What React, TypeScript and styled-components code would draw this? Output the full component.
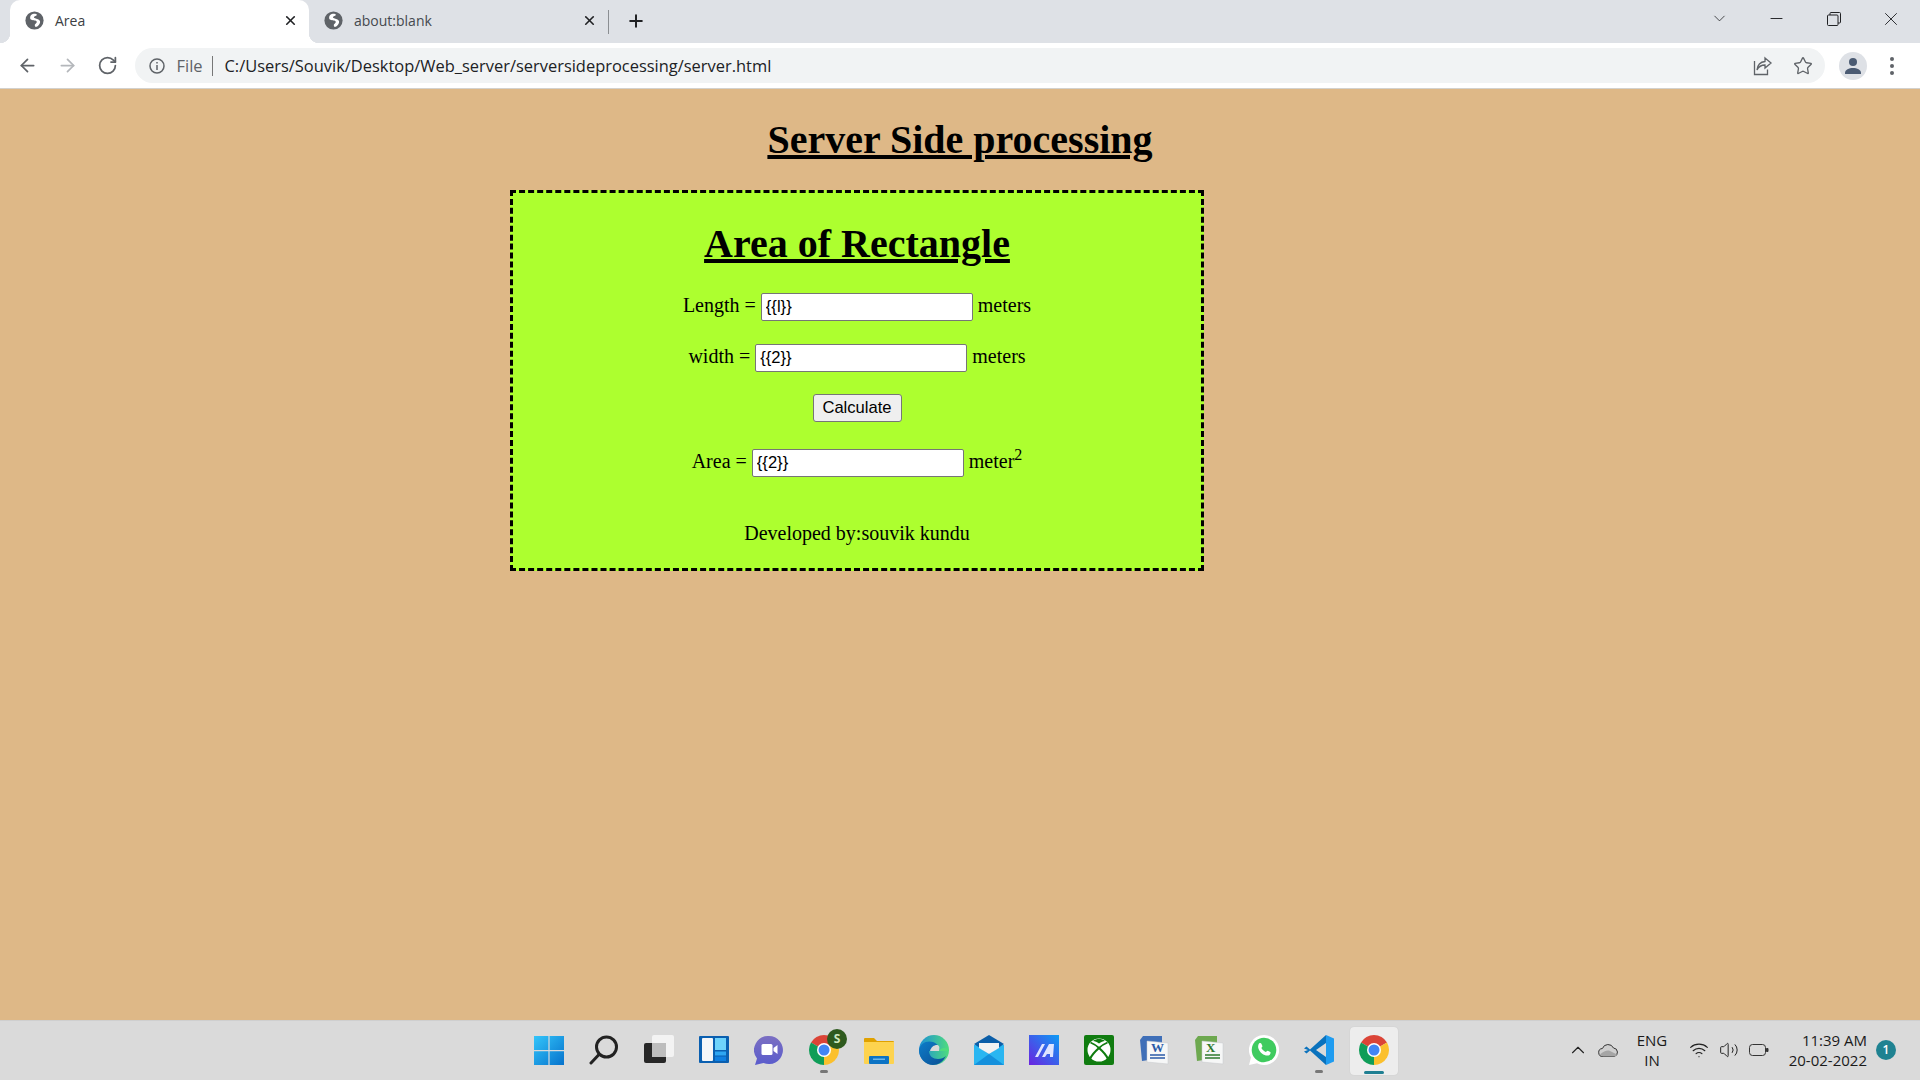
import React from "react";
import styled, { createGlobalStyle } from "styled-components";
import {
  ArrowLeft, ArrowRight, RotateCw, Star, X, Plus, ChevronDown, Minus, ChevronUp, Wifi, Volume2,
} from "lucide-react";

const Global = createGlobalStyle`
  html, body { margin: 0; padding: 0; height: 100%; overflow: hidden; }
  #root { height: 100%; }
`;

const Screen = styled.div`
  width: 1920px; height: 1080px; display: flex; flex-direction: column;
  background: #deb887; overflow: hidden;
`;
const TabStrip = styled.div`
  height: 43px; flex: none; background: #dee1e6; display: flex; align-items: flex-end;
  padding-left: 10px; font-family: "Open Sans", sans-serif; color: #3c4043;
`;
const Tab = styled.div<{ $active?: boolean }>`
  position: relative; width: 299px; height: 43px; display: flex; align-items: center;
  padding: 0 11px 2px 15px; box-sizing: border-box; gap: 11px; font-size: 14px;
  border-radius: 10px 10px 0 0;
  background: ${(p) => (p.$active ? "#fff" : "transparent")};
  color: ${(p) => (p.$active ? "#3c4043" : "#45494e")};
  ${(p) => p.$active && `
    &::before, &::after {
      content: ""; position: absolute; bottom: 0; width: 10px; height: 10px;
    }
    &::before { left: -10px; background: radial-gradient(circle at 0 0, transparent 10px, #fff 10.5px); }
    &::after { right: -10px; background: radial-gradient(circle at 100% 0, transparent 10px, #fff 10.5px); }
  `}
`;
const TabTitle = styled.span`flex: 1; white-space: nowrap;`;
const TabClose = styled(X)`width: 15px; height: 15px; color: #202124; stroke-width: 2.6;`;
const TabDivider = styled.div`width: 1px; height: 24px; background: #8b8e92; margin: 0 0 9px 0;`;
const NewTab = styled(Plus)`width: 20px; height: 20px; margin: 0 0 12px 17px; color: #202124; stroke-width: 2.4;`;
const WindowControls = styled.div`
  margin-left: auto; align-self: stretch; display: flex; align-items: center; padding: 0 18px 6px 0;
  gap: 38px; color: #202124;
`;
const ThinChevron = styled(ChevronDown)`width: 19px; height: 19px; stroke-width: 1;`;
const ThinMinus = styled(Minus)`width: 19px; height: 19px; stroke-width: 1.2;`;
const ThinClose = styled(X)`width: 22px; height: 22px; stroke-width: 1;`;
const RestoreSvg = styled.svg`margin: 0 1.5px 0 2.5px;`;

const Toolbar = styled.div`
  height: 46px; flex: none; background: #fff; display: flex; align-items: center;
  padding: 0 0 0 17px; color: #5f6368; box-sizing: border-box; border-bottom: 1px solid #d3d1cd;
  font-family: "Open Sans", sans-serif;
`;
const NavIcon = styled.span<{ $dim?: boolean }>`
  width: 21px; height: 21px; margin-right: 19px; display: flex; color: ${(p) => (p.$dim ? "#b4b7bb" : "#5f6368")};
  svg { width: 100%; height: 100%; }
`;
const Omnibox = styled.div`
  width: 1690px; height: 35px; margin-left: -2.5px; background: #f1f3f4; border-radius: 18px;
  display: flex; align-items: center; padding: 0 0 0 14px; box-sizing: border-box; font-size: 16.45px; color: #202124;
`;
const FileLabel = styled.span`color: #5f6368; margin-left: 12px; padding-right: 9px; border-right: 1px solid #777; line-height: 20px;`;
const Url = styled.span`margin-left: 12px; flex: 1; white-space: nowrap;`;
const OmniActions = styled.div`display: flex; align-items: center; gap: 20px; padding-right: 12px; color: #5f6368;`;
const Avatar = styled.div`
  width: 28px; height: 28px; border-radius: 50%; background: #dee1e6; margin-left: 14px;
  display: flex; align-items: center; justify-content: center;
`;
const Dots = styled.div`
  display: flex; flex-direction: column; gap: 3px; margin-left: 23px;
  i { width: 4px; height: 4px; border-radius: 50%; background: #5f6368; }
`;

const Page = styled.main`
  flex: 1; min-height: 0; font-family: "Liberation Serif", "Times New Roman", serif; color: #000; font-size: 20px;
`;
const PageTitle = styled.h1`
  margin: 0; height: 101px; padding-top: 28px; box-sizing: border-box; text-align: center;
  font-size: 40px; font-weight: 700; line-height: 46px; text-decoration: underline;
`;
const Card = styled.section`
  width: 694px; height: 381px; margin-left: 510px; box-sizing: border-box; border: 3px dashed #000;
  background: #adff2f; text-align: center; padding-top: 28px;
`;
const CardTitle = styled.h2`
  margin: 0 0 25px; font-size: 40px; line-height: 46px; font-weight: 700; text-decoration: underline;
`;
const Row = styled.p<{ $mt?: number }>`
  margin: ${(p) => p.$mt ?? 0}px 0 0; height: 28px; line-height: 26px;
`;
const Field = styled.input`
  width: 212px; height: 28px; box-sizing: border-box; border: 1px solid #767676; border-radius: 2px;
  background: #fff; padding: 0 4px; font: 16.6px "Liberation Sans", Arial, sans-serif; color: #000; vertical-align: middle;
`;
const CalcButton = styled.button`
  width: 89px; height: 28px; box-sizing: border-box; border: 1px solid #767676; border-radius: 3px;
  background: #efefef; padding: 0; font: 16.6px "Liberation Sans", Arial, sans-serif; color: #000; vertical-align: top;
`;
const Sup = styled.sup`font-size: 16px; line-height: 0;`;
const Credit = styled.p`margin: 46px 0 0; line-height: 23px;`;

const Taskbar = styled.footer`
  height: 60px; flex: none; background: #dadada; border-top: 1px solid #cfcfcf; box-sizing: border-box;
  display: grid; grid-template-columns: 1fr auto 1fr; align-items: center;
`;
const Dock = styled.div`grid-column: 2; display: flex; margin-left: 2px;`;
const DockItem = styled.div<{ $active?: boolean }>`
  position: relative; width: 55px; height: 48px; display: flex; align-items: center; justify-content: center;
  padding-bottom: 2px; box-sizing: border-box;
  svg { width: 30px; height: 30px; }
  ${(p) => p.$active && `
    &::before { content: ""; position: absolute; left: 4px; right: 3px; top: 0; bottom: 0; background: #ededed; border-radius: 4px; box-shadow: 0 0 1px #bbb; }
    svg { position: relative; }
  `}
`;
const Indicator = styled.i<{ $active?: boolean }>`
  position: absolute; bottom: ${(p) => (p.$active ? "1px" : "2px")}; left: 50%; height: 3px; border-radius: 2px;
  width: ${(p) => (p.$active ? "20px" : "8px")}; margin-left: ${(p) => (p.$active ? "-10px" : "-4px")};
  background: ${(p) => (p.$active ? "#1f7f92" : "#777")};
`;
const Badge = styled.span`
  position: absolute; top: 2px; right: 4px; width: 20px; height: 20px; border-radius: 50%;
  background: #2e5a1e; color: #cfe8c0; font: 700 12px "Open Sans", sans-serif; line-height: 20px; text-align: center;
`;
const Tray = styled.div`
  grid-column: 3; justify-self: end; display: flex; align-items: center; color: #1a1a1a;
  font-family: "Open Sans", sans-serif; font-size: 15px; padding: 0 24px 2px 0;
`;
const TrayIcon = styled.span<{ $ml?: number }>`
  display: flex; margin-left: ${(p) => p.$ml ?? 0}px; color: #222;
`;
const Lang = styled.div`margin-left: 13px; text-align: center; line-height: 20px; width: 40px;`;
const Clock = styled.div`margin-left: 6px; text-align: right; line-height: 20px; width: 92px; white-space: nowrap;`;
const Notice = styled.span`
  width: 20px; height: 20px; border-radius: 50%; background: #1f8291; color: #fff; margin-left: 9px;
  font-size: 12px; font-weight: 600; line-height: 20px; text-align: center;
`;

const Globe = () => (
  <svg width="19" height="19" viewBox="0 0 24 24">
    <circle cx="12" cy="12" r="11.500" fill="#5f6368" />
    <path d="M11 3.500c-3 .5-5 3-4.500 5.500.5 2.500 4 2.500 6.500 3 2 .5 2.500 2 1 3.500l-1.500 1.500c-.5 2 .5 3.500 2 3 2.500-1 5-4 4.500-7-.5-2-3-3-5.500-3.500-2-.5-3-1.500-1.500-2.500 1.500-1 3-1 3-2.500-.5-1-2.500-1.300-4-1z" fill="#fff" />
  </svg>
);
const InfoIcon = () => (
  <svg width="16" height="16" viewBox="0 0 16 16" fill="none" stroke="#5f6368" strokeWidth="1.5">
    <circle cx="8" cy="8" r="7" /><path d="M8 7v5M8 4v1.600" />
  </svg>
);
const ShareIcon = () => (
  <svg width="20" height="20" viewBox="0 0 20 20" fill="none" stroke="#5f6368" strokeWidth="1.3">
    <path d="M1.500 5v13.500h13v-5" /><path d="M12 2l6 5-6 5V9c-4 0-6 1-8 5 .5-5 3-8 8-8.500z" />
  </svg>
);
const Person = () => (
  <svg width="20" height="20" viewBox="0 0 20 20" fill="#4b5b73">
    <circle cx="10" cy="6" r="4" /><path d="M2 17c0-3.500 4-5 8-5s8 1.500 8 5v1H2z" />
  </svg>
);
const RestoreIcon = () => (
  <RestoreSvg width="14" height="14" viewBox="0 0 14 14" fill="none" stroke="#202124" strokeWidth="1">
    <rect x=".5" y="3" width="10.500" height="10.500" rx="1" /><path d="M3 3V1.500a1 1 0 0 1 1-1h8.500a1 1 0 0 1 1 1V10a1 1 0 0 1-1 1H11" />
  </RestoreSvg>
);

const WinLogo = () => (
  <svg viewBox="0 0 30 30">
    <defs><linearGradient id="w" x1="0" y1="0" x2="1" y2="1"><stop offset="0" stopColor="#33c5fa" /><stop offset="1" stopColor="#0672cc" /></linearGradient></defs>
    <path d="M0 1h14.400v14H0zM15.600 1H30v14H15.600zM0 16.200h14.400V30H0zM15.600 16.200H30V30H15.600z" fill="url(#w)" />
  </svg>
);
const SearchIcon = () => (
  <svg viewBox="0 0 30 30" fill="none" stroke="#222" strokeWidth="3" strokeLinecap="round">
    <circle cx="17.500" cy="12" r="10" /><path d="M10 19.500 2 28" />
  </svg>
);
const TaskView = () => (
  <svg viewBox="0 0 30 30">
    <rect x="8" y="0" width="22" height="22" rx="2" fill="#f3f3f3" />
    <rect x="0" y="8" width="22" height="20" rx="2" fill="#272727" />
    <rect x="8" y="8" width="14" height="14" fill="#bdbdbd" />
  </svg>
);
const Widgets = () => (
  <svg viewBox="0 0 30 30">
    <rect width="30" height="27" y="1" rx="1" fill="#0a5fb0" />
    <rect x="3" y="3" width="11" height="23" rx="1" fill="#f4f6f8" />
    <rect x="16" y="3" width="11" height="12" fill="#6fd3fb" />
    <rect x="16" y="16.500" width="11" height="4" fill="#2ea6f2" />
    <rect x="16" y="21.500" width="11" height="4.500" fill="#0f7fe0" />
  </svg>
);
const Chat = () => (
  <svg viewBox="0 0 30 30">
    <defs><linearGradient id="c" x1="0" y1="0" x2="0" y2="1"><stop offset="0" stopColor="#7b6fc2" /><stop offset="1" stopColor="#5a5ccc" /></linearGradient></defs>
    <path d="M15 1a14 14 0 1 1-5.500 26.900L1 30l2-6.500A14 14 0 0 1 15 1z" fill="url(#c)" />
    <rect x="7.500" y="9" width="11" height="11" rx="1.500" fill="#fff" />
    <path d="M19.500 13l4-3v9l-4-3z" fill="#fff" />
  </svg>
);
const ChromeLogo = () => (
  <svg viewBox="0 0 24 24">
    <path d="M12 12 22.390 6A12 12 0 0 0 1.610 6z" fill="#db4437" />
    <path d="M12 12 1.610 6A12 12 0 0 0 12 24z" fill="#0f9d58" />
    <path d="M12 12 12 24A12 12 0 0 0 22.390 6z" fill="#fbc02d" />
    <circle cx="12" cy="12" r="5.600" fill="#fff" />
    <circle cx="12" cy="12" r="4.400" fill="#4285f4" />
  </svg>
);
const Folder = () => (
  <svg viewBox="0 0 30 30">
    <path d="M0 4a1 1 0 0 1 1-1h9l3 3h16a1 1 0 0 1 1 1v3H0z" fill="#e0a100" />
    <path d="M0 7h30v21a1 1 0 0 1-1 1H1a1 1 0 0 1-1-1z" fill="#fdd34f" />
    <rect x="5" y="21" width="20" height="8" rx="1" fill="#0c73c4" />
    <rect x="9" y="23.500" width="12" height="1.500" fill="#6db7ea" />
  </svg>
);
const Edge = () => (
  <svg viewBox="0 0 30 30">
    <defs>
      <linearGradient id="e1" x1="0" y1="0" x2="1" y2="0"><stop offset="0" stopColor="#1c8fd6" /><stop offset="1" stopColor="#4fdc7e" /></linearGradient>
      <linearGradient id="e2" x1="0" y1="0" x2="1" y2="1"><stop offset="0" stopColor="#0d7dc9" /><stop offset="1" stopColor="#0b4e93" /></linearGradient>
    </defs>
    <circle cx="15" cy="15" r="15" fill="url(#e1)" />
    <path d="M0 15C1 8 8 5 14 7c5 2 7 5 6 9H10c0 5 4 8 9 8 3 0 6-1 8-3-3 6-8 9-13 9C6 30 0 23 0 15z" fill="url(#e2)" />
    <path d="M20 16h10c0-2-2-3-5-3-2 0-4 1-5 3z" fill="#4fdc7e" />
    <path d="M11 16c1-4 4-6 7-6 2 0 3 2 2 6z" fill="#dadada" />
  </svg>
);
const Mail = () => (
  <svg viewBox="0 0 30 30">
    <rect y="10" width="30" height="20" fill="#2ab6f1" />
    <path d="M0 9 15 0l15 9-15 10z" fill="#0b5ea8" />
    <path d="M5 8h20v5l-10 6-10-6z" fill="#f2f2f2" />
    <path d="M0 30 15 19l15 11z" fill="#1490dc" />
  </svg>
);
const MAIcon = () => (
  <svg viewBox="0 0 30 30">
    <defs><linearGradient id="m" x1="0" y1="1" x2="1" y2="0"><stop offset="0" stopColor="#6b23e0" /><stop offset="1" stopColor="#0c9cf5" /></linearGradient></defs>
    <rect width="30" height="30" fill="url(#m)" />
    <path d="M6 22 13 9h3L9 22zM13 22l7-13h5l-1 13h-3v-3h-3l-2 3z" fill="#dfe4ff" />
  </svg>
);
const Xbox = () => (
  <svg viewBox="0 0 30 30">
    <rect width="30" height="30" rx="2" fill="#107c10" />
    <circle cx="15" cy="15" r="11.500" fill="#fff" />
    <path d="M15 8.500c-2-1.500-4-2.400-6-2.600 3.500-2.600 8.500-2.600 12 0-2 .2-4 1.100-6 2.600z" fill="#107c10" />
    <path d="M6.500 7.500C10 9 13 11 15 13c2-2 5-4 8.500-5.500" fill="none" stroke="#107c10" strokeWidth="1.800" />
    <path d="M15 13C11 16.500 7.500 20.500 6 24M15 13c4 3.500 7.500 7.500 9 11" fill="none" stroke="#107c10" strokeWidth="2.200" />
  </svg>
);
const Sheet = ({ tint, letter, letterColor }: { tint: string; letter: string; letterColor: string }) => (
  <svg viewBox="0 0 30 30">
    <path d="M1 5 4 1h19v22L3 26z" fill={tint} />
    <path d="M8 6l21 2v21l-21-2z" fill="#f6f7f7" stroke="#c6c9cc" strokeWidth=".5" />
    <text x="12" y="17" fontFamily="Liberation Serif" fontWeight="700" fontSize="13" fill={letterColor}>{letter}</text>
    <path d="M11 20h15M11 23h15" stroke={letterColor} strokeWidth="1.500" />
  </svg>
);
const WhatsApp = () => (
  <svg viewBox="0 0 30 30">
    <path d="M15 0a15 15 0 1 1-7 28.200L0 30l2-7.500A15 15 0 0 1 15 0z" fill="#fff" />
    <circle cx="15" cy="15" r="12.300" fill="#3fcb5f" />
    <path d="M10 8.500c1-.8 2-.6 2.400.2l1 2.300c.2.600-.7 1.500-1 2 .8 1.700 2.500 3.300 4.400 4 .6-.4 1.400-1.400 2-1.200l2.500 1.300c.6.600.2 2-.7 2.800-2 1.400-5 .6-7.700-1.500-3-2.400-5-6.500-2.900-9.900z" fill="#fff" />
  </svg>
);
const VSCode = () => (
  <svg viewBox="0 0 30 30">
    <path d="M22 0 6 14.500 2.500 11.500 0 13.500 4 15 0 16.500l2.500 2 3.500-3 16 14.500V22L12 15 22 8z" fill="#0a72bd" />
    <path d="M22 0 30 3.500v23L22 30z" fill="#1f9cf0" />
  </svg>
);
const CloudIcon = () => (
  <svg width="21" height="14" viewBox="0 0 21 14">
    <path d="M5 13.500a4 4 0 0 1-.6-8A6 6 0 0 1 15.500 5a4.300 4.300 0 0 1 .5 8.500z" fill="#cfcfcf" stroke="#333" strokeWidth="1" />
    <path d="M5 13.500a4 4 0 0 1-3-2c3-3 7-4.500 9-4l8 4a4 4 0 0 1-3 2z" fill="#a5a5a5" />
  </svg>
);
const BatteryIcon = () => (
  <svg width="20" height="14" viewBox="0 0 20 14" fill="none" stroke="#333" strokeWidth="1">
    <rect x=".5" y="1.500" width="16" height="11" rx="3" /><path d="M17.500 5.500h1.500v3h-1.500z" fill="#333" />
  </svg>
);

const dock: { key: string; node: React.ReactNode; dot?: boolean; active?: boolean; badge?: string }[] = [
  { key: "win", node: <WinLogo /> },
  { key: "search", node: <SearchIcon /> },
  { key: "task", node: <TaskView /> },
  { key: "widgets", node: <Widgets /> },
  { key: "chat", node: <Chat /> },
  { key: "chrome1", node: <ChromeLogo />, dot: true, badge: "S" },
  { key: "folder", node: <Folder /> },
  { key: "edge", node: <Edge /> },
  { key: "mail", node: <Mail /> },
  { key: "ma", node: <MAIcon /> },
  { key: "xbox", node: <Xbox /> },
  { key: "word", node: <Sheet tint="#3f6fb8" letter="W" letterColor="#2a5aa8" /> },
  { key: "excel", node: <Sheet tint="#6da84f" letter="X" letterColor="#2f7a2f" /> },
  { key: "wa", node: <WhatsApp /> },
  { key: "vs", node: <VSCode />, dot: true },
  { key: "chrome2", node: <ChromeLogo />, active: true },
];

export default function App() {
  return (
    <Screen>
      <Global />
      <TabStrip>
        <Tab $active><Globe /><TabTitle>Area</TabTitle><TabClose /></Tab>
        <Tab><Globe /><TabTitle>about:blank</TabTitle><TabClose /></Tab>
        <TabDivider />
        <NewTab />
        <WindowControls>
          <ThinChevron /><ThinMinus /><RestoreIcon /><ThinClose />
        </WindowControls>
      </TabStrip>
      <Toolbar>
        <NavIcon><ArrowLeft /></NavIcon>
        <NavIcon $dim><ArrowRight /></NavIcon>
        <NavIcon><RotateCw /></NavIcon>
        <Omnibox>
          <InfoIcon />
          <FileLabel>File</FileLabel>
          <Url>C:/Users/Souvik/Desktop/Web_server/serversideprocessing/server.html</Url>
          <OmniActions>
            <ShareIcon />
            <Star size={20} strokeWidth={1.6} />
          </OmniActions>
        </Omnibox>
        <Avatar><Person /></Avatar>
        <Dots><i /><i /><i /></Dots>
      </Toolbar>
      <Page>
        <PageTitle>Server Side processing</PageTitle>
        <Card>
          <CardTitle>Area of Rectangle</CardTitle>
          <Row>Length = <Field readOnly value="{{l}}" /> meters</Row>
          <Row $mt={23}>width = <Field readOnly value="{{2}}" /> meters</Row>
          <Row $mt={23}><CalcButton>Calculate</CalcButton></Row>
          <Row $mt={26}>Area = <Field readOnly value="{{2}}" /> meter<Sup>2</Sup></Row>
          <Credit>Developed by:souvik kundu</Credit>
        </Card>
      </Page>
      <Taskbar>
        <Dock>
          {dock.map((d) => (
            <DockItem key={d.key} $active={d.active}>
              {d.node}
              {d.badge && <Badge>{d.badge}</Badge>}
              {d.dot && <Indicator />}
              {d.active && <Indicator $active />}
            </DockItem>
          ))}
        </Dock>
        <Tray>
          <TrayIcon><ChevronUp size={22} strokeWidth={1.2} /></TrayIcon>
          <TrayIcon $ml={9}><CloudIcon /></TrayIcon>
          <Lang>ENG<br />IN</Lang>
          <TrayIcon $ml={17}><Wifi size={20} strokeWidth={1.4} /></TrayIcon>
          <TrayIcon $ml={10}><Volume2 size={20} strokeWidth={1.2} /></TrayIcon>
          <TrayIcon $ml={10}><BatteryIcon /></TrayIcon>
          <Clock>11:39 AM<br />20-02-2022</Clock>
          <Notice>1</Notice>
        </Tray>
      </Taskbar>
    </Screen>
  );
}
